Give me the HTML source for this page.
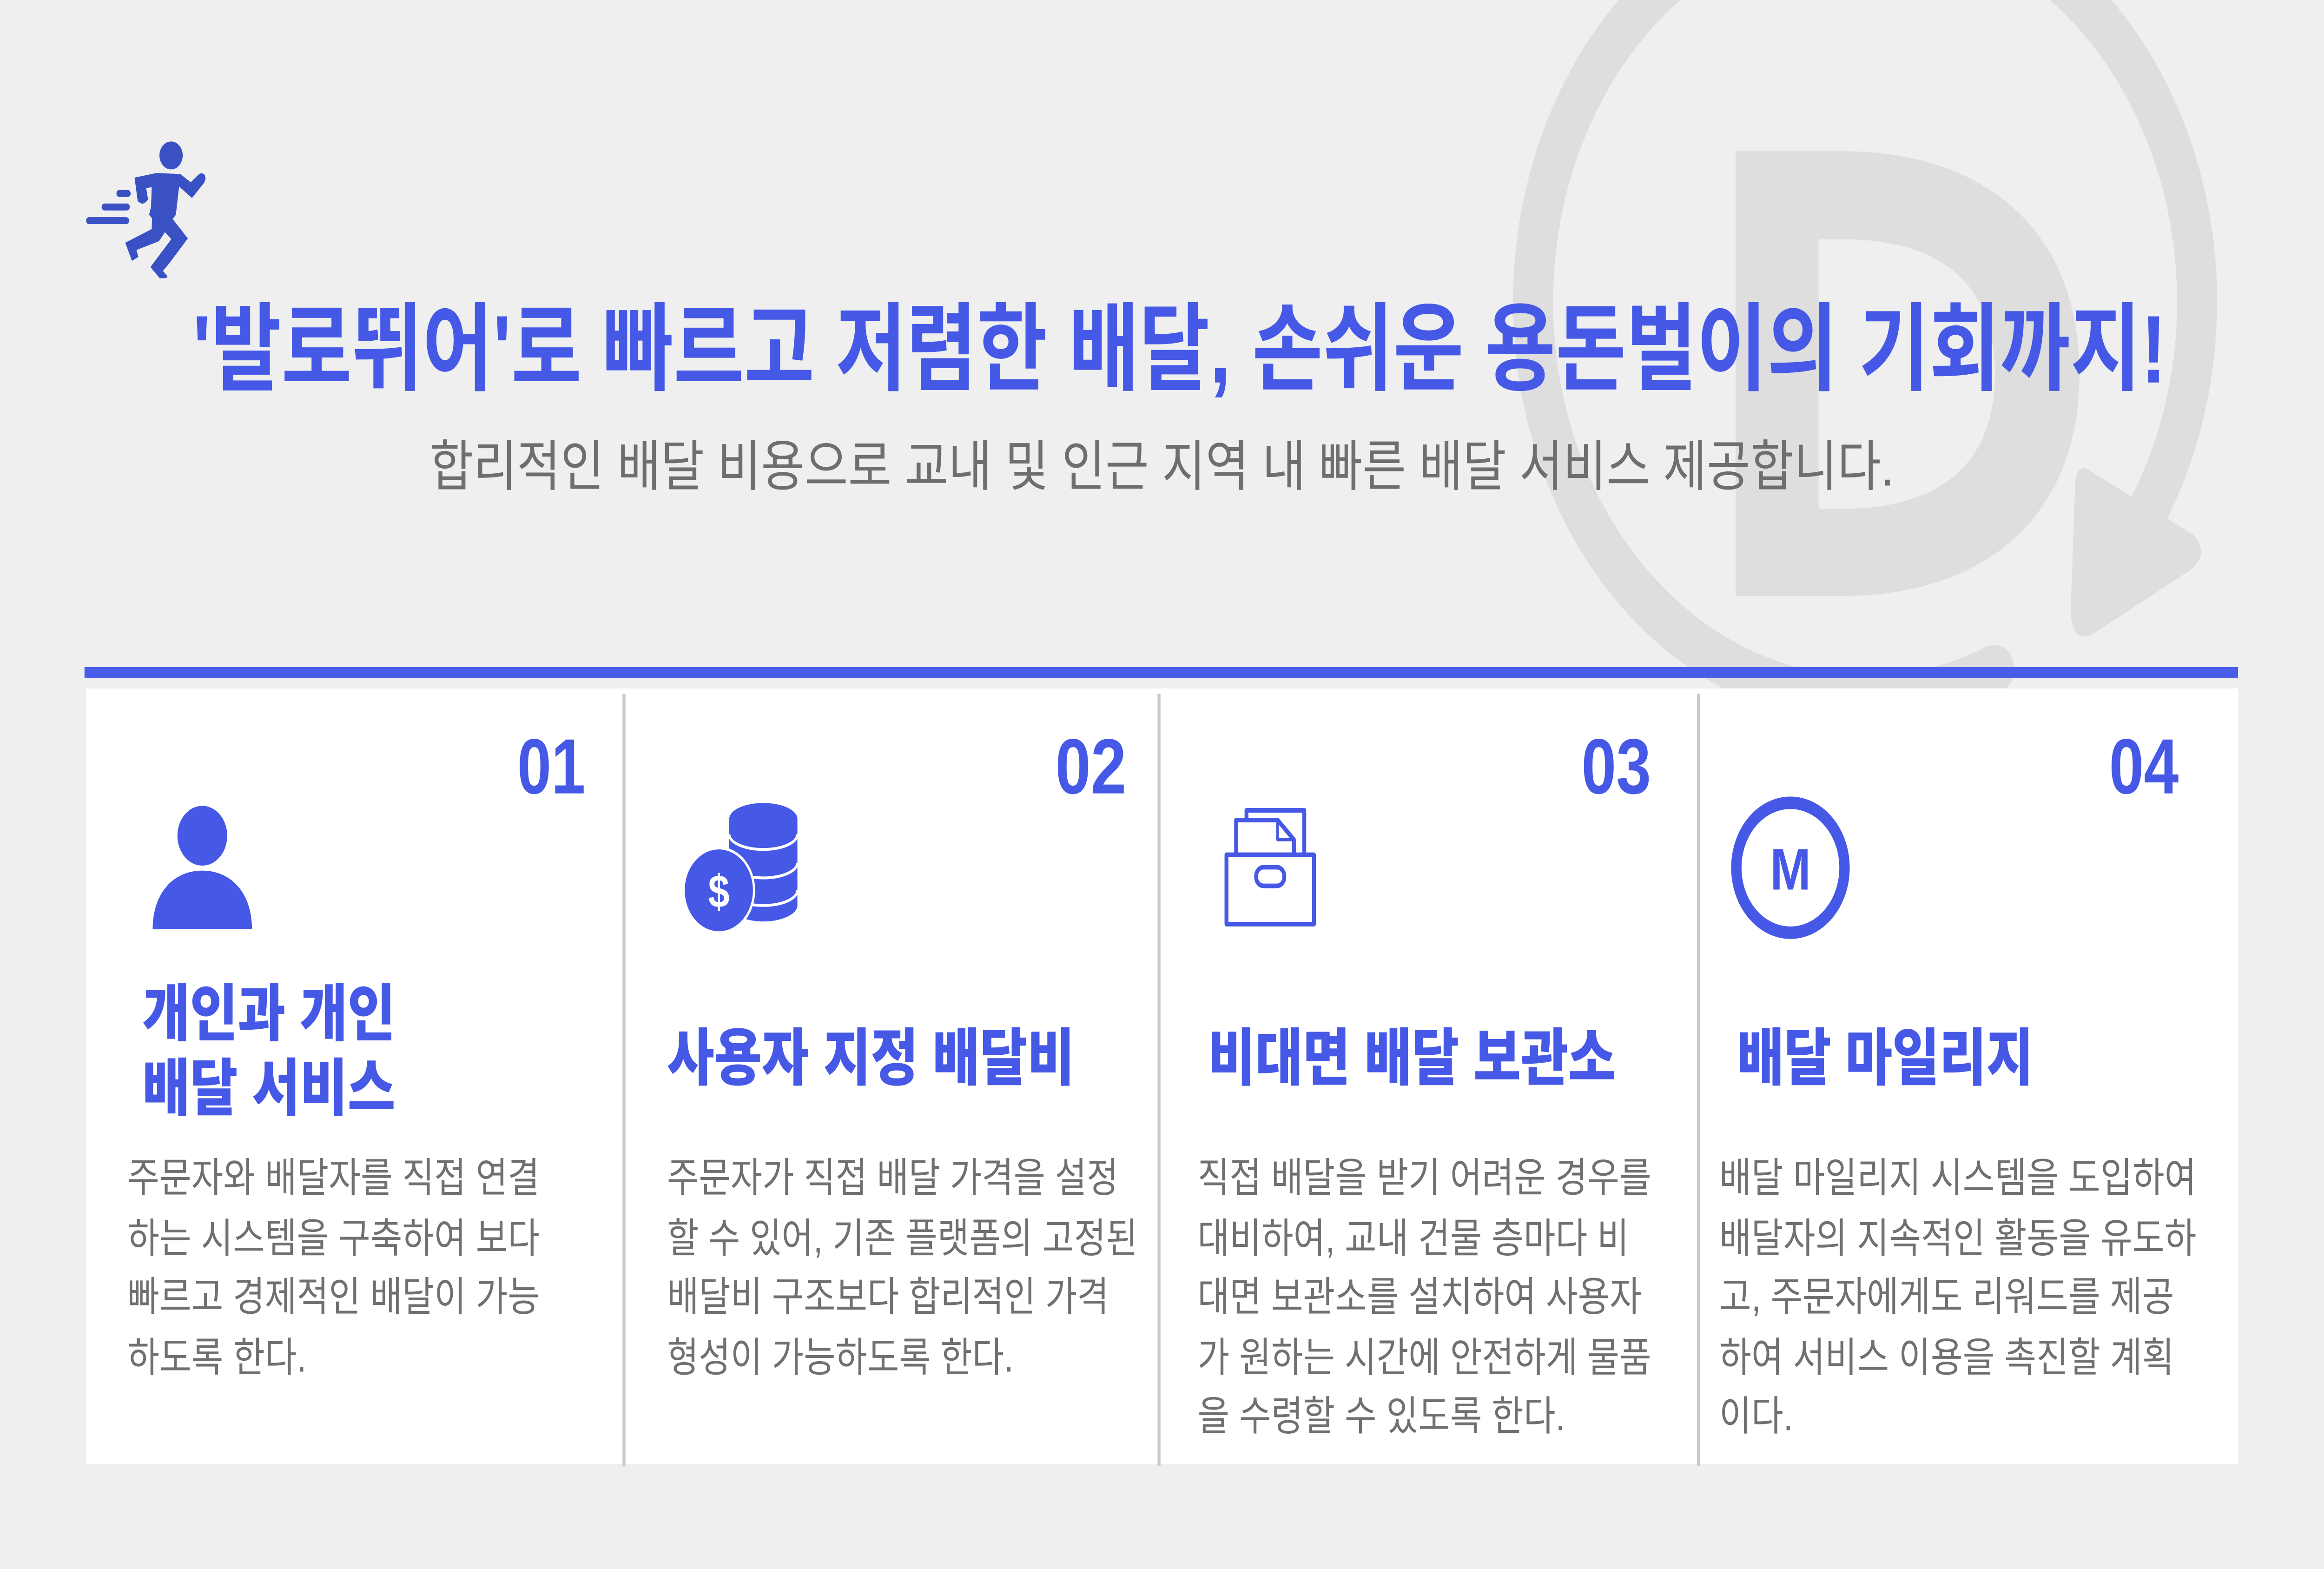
<!DOCTYPE html>
<html><head><meta charset="utf-8">
<style>
html,body{margin:0;padding:0;}
html,body{width:100%;height:100%;overflow:hidden;background:#efefef;}
body{position:relative;}
#s{position:absolute;left:0;top:0;width:1568px;height:882px;transform:scale(3.82653);transform-origin:0 0;
 font-family:"Liberation Sans","Noto Sans CJK KR",sans-serif;}
.a{position:absolute;white-space:nowrap;}
.fit{transform-origin:0 50%;}
.t{color:#4659e6;}
.title{left:130px;top:167px;font-size:54px;line-height:60px;font-weight:700;--w:1332;}
.sub{left:290px;top:242.5px;font-size:31px;line-height:40px;color:#6e6e6e;--w:988;}
.num{top:407px;font-size:44px;line-height:50px;font-weight:700;color:#4659e6;}
.hd{font-size:35px;line-height:42px;font-weight:900;color:#4659e6;}
.bd{top:646px;font-size:23px;line-height:33.5px;color:#707070;}
.bd span,.hd span{display:inline-block;}
.card{position:absolute;top:387px;height:436px;background:#fff;}
.div{position:absolute;top:390px;height:434px;width:1.5px;background:#c9c9c9;}
</style></head><body>
<div id="s">
<svg class="a" style="left:0;top:0" width="1568" height="882" viewBox="0 0 1568 882">
 <path d="M1446 292 A224 224 0 1 0 1345.5 376" fill="none" stroke="#dedede" stroke-width="27" stroke-linecap="round"/>
 <path d="M1410 268 Q1403 262 1403 275 L1400 345 Q1401 360 1414 352 L1476 318 Q1487 311 1478 303 Z" fill="#dedede" stroke="#dedede" stroke-width="6" stroke-linejoin="round"/>
 <path fill-rule="evenodd" fill="#dedede" d="M1171 85 L1243 85 C1340 85 1403 130 1403 210 C1403 290 1340 335 1243 335 L1171 335 Z M1227 134.5 L1227 286 L1243 286 C1310 286 1346 260 1346 210 C1346 160 1310 134.5 1243 134.5 Z"/>
</svg>

<svg class="a" style="left:52.3px;top:73.2px" width="94.1" height="88.9" viewBox="0 0 1080 1020">
 <g fill="#3a51c4">
 <circle cx="728" cy="165" r="90"/>
 <path d="M445 308 L615 278 L800 285 L880 338 L945 285 L965 278 L990 290 L995 315 L985 340 L890 440 L790 365 L765 548 L740 575 L858 700 L715 860 L665 910 L700 945 L690 957 L640 957 L568 885 L730 705 L680 660 L635 718 L460 775 L475 820 L425 845 L373 728 L578 640 L580 570 L558 548 L573 495 L578 370 L535 375 L550 450 L530 468 L505 478 L470 462 Z"/>
 <rect x="305" y="388" width="110" height="45" rx="22.5"/>
 <rect x="190" y="475" width="218" height="45" rx="22.5"/>
 <rect x="70" y="563" width="333" height="45" rx="22.5"/>
 </g>
</svg>

<div class="a fit title t">'발로뛰어'로 빠르고 저렴한 배달, 손쉬운 용돈벌이의 기회까지!</div>
<div class="a fit sub">합리적인 배달 비용으로 교내 및 인근 지역 내 빠른 배달 서비스 제공합니다.</div>

<div class="a" style="left:56.5px;top:374.8px;width:1453.5px;height:6px;background:#4a5de8;"></div>

<div class="card" style="left:58px;width:1452px;"></div>
<div class="div" style="left:420px;"></div>
<div class="div" style="left:781px;"></div>
<div class="div" style="left:1145px;"></div>

<div class="a fit num" style="left:349px;--w:46">01</div>
<div class="a fit num" style="left:712px;--w:48">02</div>
<div class="a fit num" style="left:1067px;--w:47">03</div>
<div class="a fit num" style="left:1423px;--w:47">04</div>

<svg class="a" style="left:0;top:0" width="1568" height="882" viewBox="0 0 1568 882">
 <g fill="#4659e6">
  <ellipse cx="136.5" cy="469.8" rx="16.8" ry="16.8"/>
  <path d="M103 522.3 C103 502 117 489.4 136.5 489.4 C156 489.4 170 502 170 522.3 Z"/>
  <path d="M492 460 L492 509 C492 514 503 518 515 518 C527 518 538 514 538 509 L538 460 Z"/>
  <ellipse cx="515" cy="460.3" rx="23" ry="8.9"/>
  <path d="M492 469 C492 474 503 477.5 515 477.5 C527 477.5 538 474 538 469" fill="none" stroke="#fff" stroke-width="1.6"/>
  <path d="M492 485 C492 490 503 493.5 515 493.5 C527 493.5 538 490 538 485" fill="none" stroke="#fff" stroke-width="1.6"/>
  <path d="M492 500.5 C492 505.5 503 509 515 509 C527 509 538 505.5 538 500.5" fill="none" stroke="#fff" stroke-width="1.6"/>
  <circle cx="485" cy="500.5" r="24.5" fill="#fff"/>
  <circle cx="485" cy="500.5" r="23"/>
 </g>
 <text x="485" y="510" font-family="Liberation Sans, sans-serif" font-weight="700" font-size="26" fill="#fff" text-anchor="middle">$</text>
 <g fill="none" stroke="#4659e6" stroke-width="2.6" stroke-linejoin="round">
  <path d="M841 461 L841 455.5 L880 455.5 L880 480.5"/>
  <path d="M834 480.5 L834 461 L862 461 L873 472 L873 480.5"/>
  <path d="M862 461 L862 472 L873 472" stroke-width="1.8"/>
  <rect x="827.5" y="480.5" width="59" height="39"/>
  <rect x="847.5" y="487.5" width="19" height="10.5" rx="5"/>
 </g>
 <circle cx="1208" cy="487.8" r="36.5" fill="none" stroke="#4659e6" stroke-width="7"/>
 <text x="1208" y="500" font-family="Liberation Sans, sans-serif" font-weight="700" font-size="33" fill="#4659e6" text-anchor="middle">M</text>
</svg>

<div class="a hd fitb" style="left:96px;top:550px;--w:171"><span>개인과 개인</span><br><span>배달 서비스</span></div>
<div class="a hd fitb" style="left:450px;top:574.5px;--w:275"><span>사용자 지정 배달비</span></div>
<div class="a hd fitb" style="left:815px;top:574.5px;--w:275"><span>비대면 배달 보관소</span></div>
<div class="a hd fitb" style="left:1172px;top:574.5px;--w:200"><span>배달 마일리지</span></div>

<div class="a bd fitb" style="left:86px;--w:278"><span>주문자와 배달자를 직접 연결</span><br><span>하는 시스템을 구축하여 보다</span><br><span>빠르고 경제적인 배달이 가능</span><br><span>하도록 한다.</span></div>
<div class="a bd fitb" style="left:450px;--w:305"><span>주문자가 직접 배달 가격을 설정</span><br><span>할 수 있어, 기존 플랫폼의 고정된</span><br><span>배달비 구조보다 합리적인 가격</span><br><span>형성이 가능하도록 한다.</span></div>
<div class="a bd fitb" style="left:807.5px;--w:306.5"><span>직접 배달을 받기 어려운 경우를</span><br><span>대비하여, 교내 건물 층마다 비</span><br><span>대면 보관소를 설치하여 사용자</span><br><span>가 원하는 시간에 안전하게 물품</span><br><span>을 수령할 수 있도록 한다.</span></div>
<div class="a bd fitb" style="left:1160px;--w:321.5"><span>배달 마일리지 시스템을 도입하여</span><br><span>배달자의 지속적인 활동을 유도하</span><br><span>고, 주문자에게도 리워드를 제공</span><br><span>하여 서비스 이용을 촉진할 계획</span><br><span>이다.</span></div>
</div>
<script>
(function(){
 document.querySelectorAll('.fit').forEach(function(e){
  var w=parseFloat(getComputedStyle(e).getPropertyValue('--w'));var n=e.offsetWidth;
  if(w&&n)e.style.transform='scaleX('+(w/n)+')';
 });
 document.querySelectorAll('.fitb').forEach(function(e){
  var w=parseFloat(getComputedStyle(e).getPropertyValue('--w'));var f=e.querySelector('span');var n=f?f.offsetWidth:0;
  if(w&&n){e.style.transformOrigin='0 0';e.style.transform='scaleX('+(w/n)+')';}
 });
 function fitPage(){
  var W=document.documentElement.clientWidth||window.innerWidth||6000;
  var H=document.documentElement.clientHeight||window.innerHeight||3375;
  document.getElementById('s').style.transform='scale('+(W/1568)+','+(H/882)+')';
 }
 fitPage();
 window.addEventListener('resize',fitPage);
})();
</script>
</body></html>
